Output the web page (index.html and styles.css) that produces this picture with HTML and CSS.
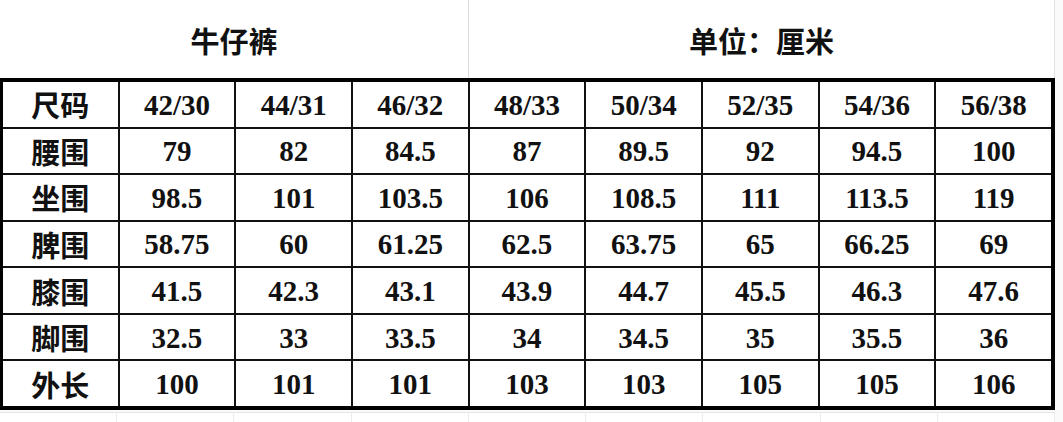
FILE: index.html
```html
<!DOCTYPE html>
<html lang="zh">
<head>
<meta charset="utf-8">
<title>牛仔裤尺码表</title>
<link rel="stylesheet" href="styles.css">
</head>
<body>
<div class="page">
  <div class="head">
    <div class="head-cell left">牛仔裤</div>
    <div class="head-cell right">单位：厘米</div>
  </div>
  <div class="grid">
    <div class="c lab">尺码</div><div class="c">42/30</div><div class="c">44/31</div><div class="c">46/32</div><div class="c">48/33</div><div class="c">50/34</div><div class="c">52/35</div><div class="c">54/36</div><div class="c">56/38</div>
    <div class="c lab">腰围</div><div class="c">79</div><div class="c">82</div><div class="c">84.5</div><div class="c">87</div><div class="c">89.5</div><div class="c">92</div><div class="c">94.5</div><div class="c">100</div>
    <div class="c lab">坐围</div><div class="c">98.5</div><div class="c">101</div><div class="c">103.5</div><div class="c">106</div><div class="c">108.5</div><div class="c">111</div><div class="c">113.5</div><div class="c">119</div>
    <div class="c lab">脾围</div><div class="c">58.75</div><div class="c">60</div><div class="c">61.25</div><div class="c">62.5</div><div class="c">63.75</div><div class="c">65</div><div class="c">66.25</div><div class="c">69</div>
    <div class="c lab">膝围</div><div class="c">41.5</div><div class="c">42.3</div><div class="c">43.1</div><div class="c">43.9</div><div class="c">44.7</div><div class="c">45.5</div><div class="c">46.3</div><div class="c">47.6</div>
    <div class="c lab">脚围</div><div class="c">32.5</div><div class="c">33</div><div class="c">33.5</div><div class="c">34</div><div class="c">34.5</div><div class="c">35</div><div class="c">35.5</div><div class="c">36</div>
    <div class="c lab">外长</div><div class="c">100</div><div class="c">101</div><div class="c">101</div><div class="c">103</div><div class="c">103</div><div class="c">105</div><div class="c">105</div><div class="c">106</div>
  </div>
  <div class="foot">
    <div></div><div></div><div></div><div></div><div></div><div></div><div></div><div></div><div></div>
  </div>
</div>
</body>
</html>
```
FILE: styles.css
```css
html, body {
  margin: 0;
  padding: 0;
  background: #ffffff;
}
.page {
  width: 1063px;
  height: 422px;
  overflow: hidden;
  background: #fafafa;
}
.head {
  display: flex;
  width: 1055px;
  height: 78px;
  background: #ffffff;
}
.head-cell {
  display: flex;
  align-items: center;
  justify-content: center;
  font-family: "Noto Sans CJK SC", "Noto Sans", sans-serif;
  font-weight: 700;
  font-size: 29px;
  color: #111;
  padding-top: 2px;
  box-sizing: border-box;
}
.head-cell.left {
  width: 469px;
  border-right: 1px solid #dcdcdc;
}
.head-cell.right {
  width: 586px;
  border-right: 1px solid #e2e2e2;
}
.grid {
  width: 1055px;
  box-sizing: border-box;
  border-style: solid;
  border-color: #000;
  border-width: 4px 4px 4px 3px;
  background: #111;
  display: grid;
  grid-template-columns: repeat(9, 1fr);
  grid-template-rows: repeat(7, 1fr);
  gap: 2px;
  height: 332px;
}
.c {
  background: #ffffff;
  display: flex;
  align-items: center;
  justify-content: center;
  font-family: "Liberation Serif", "Times New Roman", serif;
  font-weight: 700;
  font-size: 29px;
  color: #111;
  padding-top: 2px;
}
.c.lab {
  font-family: "Noto Sans CJK SC", "Noto Sans", sans-serif;
  font-size: 29px;
  font-weight: 700;
  padding-top: 0;
}
.foot {
  width: 1055px;
  height: 12px;
  margin-top: 2px;
  display: grid;
  grid-template-columns: repeat(9, 1fr);
  border-top: 1px solid #e6e6e6;
  background: #ffffff;
}
.foot div {
  border-right: 1px solid #ececec;
}
```
